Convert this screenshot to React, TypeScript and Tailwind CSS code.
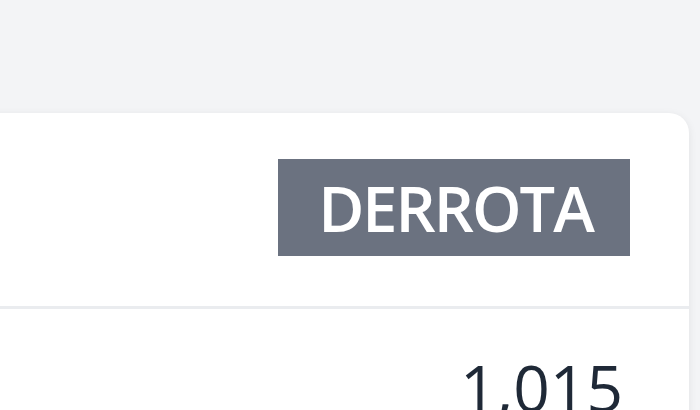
export default function App() {
  return (
    <div className="w-[700px] h-[410px] overflow-hidden bg-[#f3f4f6]" style={{ fontFamily: '"Open Sans", sans-serif' }}>
      <div className="pt-[113px] pr-[11px] ml-[-40px]">
        <div className="bg-white rounded-[20px] shadow-[0_2px_8px_rgba(0,0,0,0.08)] h-[400px]">
          <div className="h-[196px] flex items-center justify-end pr-[59px] border-b-[3px] border-[#eaecef]">
            <div className="h-[97px] w-[352px] bg-[#6b7280] text-white font-semibold text-[63px] leading-none flex items-center justify-center mt-[-4px] tracking-[-2px] pl-[3px]">
              DERROTA
            </div>
          </div>
          <div className="flex justify-end pr-[66px] pt-[47px]">
            <span className="text-[64px] leading-none text-[#1f2937]">1,015</span>
          </div>
        </div>
      </div>
    </div>
  );
}
